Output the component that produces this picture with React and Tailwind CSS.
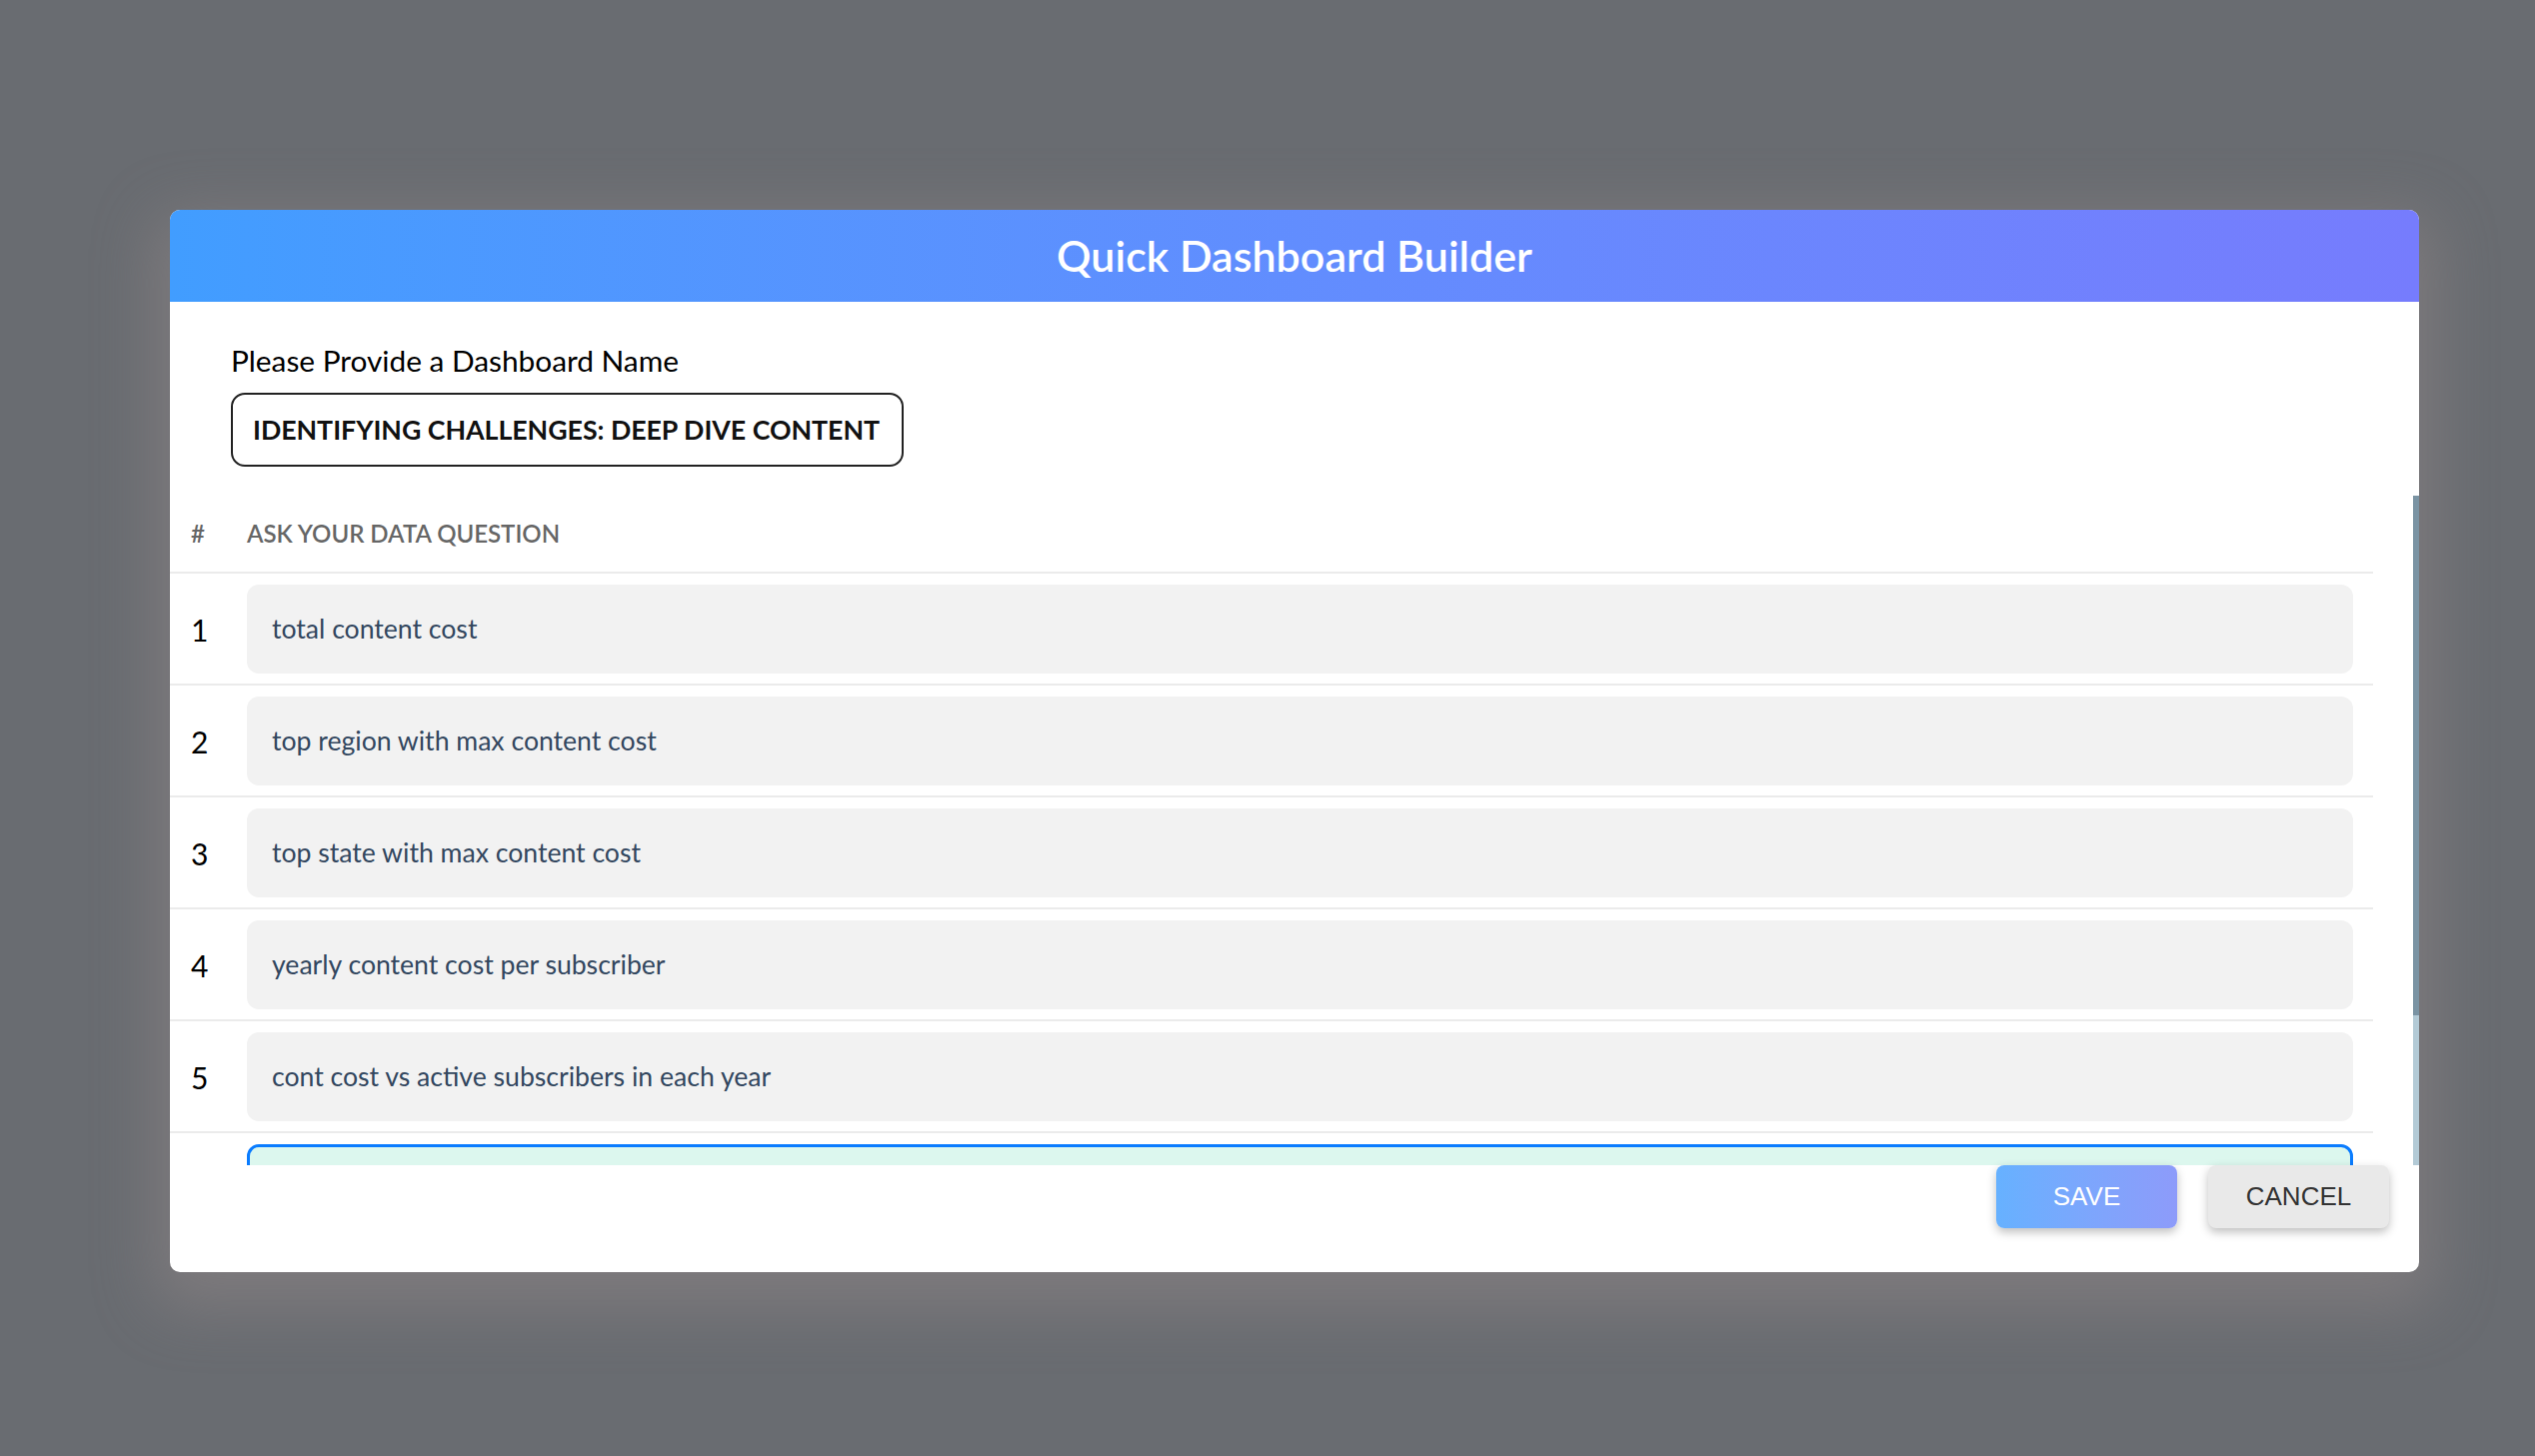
const questions = [
  "total content cost",
  "top region with max content cost",
  "top state with max content cost",
  "yearly content cost per subscriber",
  "cont cost vs active subscribers in each year",
];

const QuestionRow = ({ index, text, active }) => {
  return (
    <div className="flex items-center border-b-2 border-[#ebebeb] pt-[11px] pb-[10px]">
      <div className="w-[77px] shrink-0 pl-[21px] text-[30px] leading-none text-black">
        {index}
      </div>
      <div
        className={
          active
            ? "mr-[20px] flex h-[89px] flex-1 items-center rounded-[12px] border-[3px] border-[#0a7cff] bg-[#dcf7ee] pl-[22px]"
            : "mr-[20px] flex h-[89px] flex-1 items-center rounded-[12px] bg-[#f2f2f2] pl-[25px]"
        }
      >
        <span className="text-[26.6px] text-[#33475f]">{text}</span>
      </div>
    </div>
  );
};

export default function App() {
  return (
    <div className="min-h-screen w-full bg-[#696c71] pl-[170px] pt-[210px] font-[Lato,sans-serif]">
      <div className="w-[2250px] overflow-hidden rounded-[10px] bg-white shadow-[0_20px_60px_16px_rgba(150,140,140,0.45)]">
        {/* header */}
        <div className="flex h-[92px] items-center justify-center bg-linear-to-r from-[#419dff] to-[#767cfd]">
          <h2 className="text-[43px] font-semibold text-white">
            Quick Dashboard Builder
          </h2>
        </div>

        {/* name */}
        <div className="pl-[61px] pt-[42px]">
          <label className="block text-[29.8px] leading-[34px] text-black">
            Please Provide a Dashboard Name
          </label>
          <div className="mt-[15px] flex h-[74px] w-[673px] items-center rounded-[14px] border-2 border-[#222] pl-[20px]">
            <span className="text-[26.7px] font-bold text-[#111]">
              IDENTIFYING CHALLENGES: DEEP DIVE CONTENT
            </span>
          </div>
        </div>

        {/* questions */}
        <div className="mt-[29px] flex h-[670px]">
          <div className="flex-1 overflow-hidden">
            <div className="mr-[40px]">
              <div className="flex h-[78px] items-center border-b-2 border-[#ebebeb] text-[24px] font-semibold text-[#666]">
                <div className="w-[77px] pl-[21px]">#</div>
                <div>ASK YOUR DATA QUESTION</div>
              </div>
              {questions.map((q, i) => (
                <QuestionRow key={i} index={i + 1} text={q} />
              ))}
              <QuestionRow index="" text="" active />
            </div>
          </div>
          <div className="flex w-[6px] flex-col bg-[#b3cad6]">
            <div className="h-[520px] bg-[#7a93a3]" />
          </div>
        </div>

        {/* footer */}
        <div className="flex justify-end gap-[31px] pr-[30px] pb-[44px] font-['Liberation_Sans',Arial,sans-serif]">
          <button className="h-[63px] w-[181px] rounded-[8px] bg-linear-to-r from-[#66b1ff] to-[#8d9bfa] text-[26px] text-white shadow-[0_4px_10px_rgba(0,0,0,0.25)]">
            SAVE
          </button>
          <button className="h-[63px] w-[181px] rounded-[8px] bg-[#e9e9e9] text-[26px] text-[#333] shadow-[0_4px_10px_rgba(0,0,0,0.25)]">
            CANCEL
          </button>
        </div>
      </div>
    </div>
  );
}
